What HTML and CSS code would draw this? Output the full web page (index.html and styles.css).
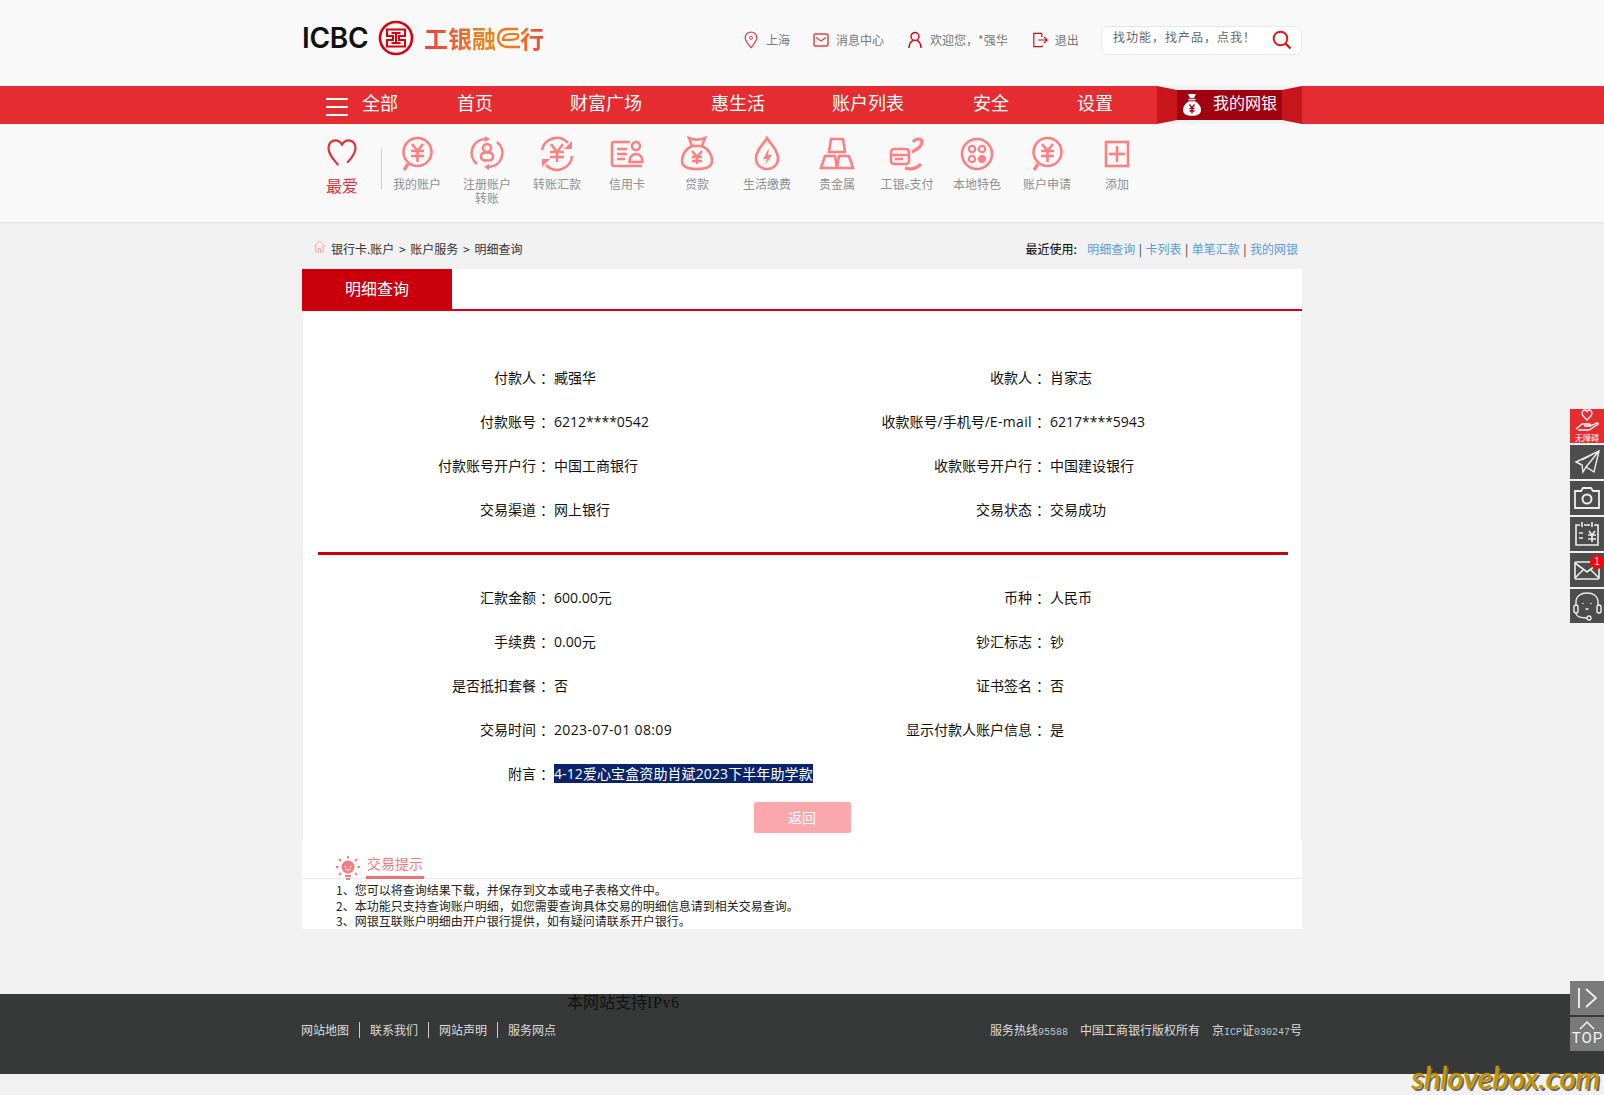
FILE: index.html
```html
<!DOCTYPE html>
<html lang="zh-CN">
<head>
<meta charset="utf-8">
<title>明细查询</title>
<link rel="stylesheet" href="styles.css">
</head>
<body>
<header class="top">
  <div class="wrap top-in">
    <div class="logo">
      <span class="logo-en">ICBC</span>
      <svg class="emblem" viewBox="0 0 36 36"><circle cx="18" cy="18" r="16" fill="none" stroke="#d7000f" stroke-width="2.600"/><path d="M9 9.500H27V16H21V20H27V26.500H9V20H15V16H9zM13.500 13H22.500M18 13V23M13.500 23H22.500" fill="none" stroke="#d7000f" stroke-width="2"/></svg>
      <span class="logo-cn">工银融</span>
      <svg class="logo-e" viewBox="0 0 26 24"><path d="M22 3H11C5 3 2 7 2 12s4 9 9 9h13" fill="none" stroke="#ee7a1c" stroke-width="2.400"/><path d="M7 14c0-4 3-6 7-6h6c3 0 3 4 0 5-3 1-8 1-13 1z" fill="none" stroke="#ee7a1c" stroke-width="2.200"/></svg>
      <span class="logo-cn logo-end">行</span>
    </div>
    <nav class="tools">
      <a class="tool t1"><svg viewBox="0 0 16 18"><path d="M8 1.200c-3.400 0-5.800 2.500-5.800 5.500 0 3.300 3.400 6.900 5.800 10 2.400-3.100 5.800-6.700 5.800-10 0-3-2.400-5.500-5.800-5.500z" fill="none" stroke="#e4434a" stroke-width="1.300"/><circle cx="8" cy="6.800" r="1.500" fill="none" stroke="#e4434a"/></svg>上海</a>
      <a class="tool t2"><svg viewBox="0 0 16 14"><rect x="1" y="1" width="14" height="12" rx="1.500" fill="none" stroke="#e4434a" stroke-width="1.500"/><path d="M3 4.500l5 3.500 5-3.500" fill="none" stroke="#e4434a" stroke-width="1.400"/></svg>消息中心</a>
      <a class="tool t3"><svg viewBox="0 0 16 18"><circle cx="8" cy="5.500" r="4" fill="none" stroke="#d7000f" stroke-width="1.400"/><path d="M2 17c0-4 2-7 4-7.500M14 17c0-4-2-7-4-7.500" fill="none" stroke="#d7000f" stroke-width="1.400"/></svg>欢迎您，*强华</a>
      <a class="tool t4"><svg viewBox="0 0 18 18"><path d="M11 1.500H2v15h9l1-1" fill="none" stroke="#d7000f" stroke-width="1.300"/><path d="M7 9h10M13.500 5.500L17 9l-3.500 3.500M11 1.500v4" fill="none" stroke="#d7000f" stroke-width="1.300"/></svg>退出</a>
    </nav>
    <div class="search">
      <span class="search-text">找功能，找产品，点我！</span>
      <svg viewBox="0 0 20 20"><circle cx="8.500" cy="8.500" r="6.800" fill="none" stroke="#f01010" stroke-width="1.900"/><path d="M13.500 13.500l5 5" stroke="#f01010" stroke-width="2.400"/></svg>
    </div>
  </div>
</header>

<div class="nav">
  <div class="wrap nav-in">
    <span class="burger"><i></i><i></i><i></i></span>
    <a class="nav-all">全部</a>
    <a class="nav-home">首页</a>
    <a class="nav-i n1">财富广场</a>
    <a class="nav-i n2">惠生活</a>
    <a class="nav-i n3">账户列表</a>
    <a class="nav-i n2">安全</a>
    <a class="nav-i n4">设置</a>
    <div class="ribbon">
      <svg class="ribbon-svg" viewBox="0 0 145 38"><rect width="145" height="38" fill="#f1f1f1"/><path d="M0 0l20 4v30L0 38zM145 0l-20 4v30l20 4z" fill="#c8171c"/><rect x="20" y="4" width="105" height="30" fill="#a00010"/></svg>
      <svg class="bag" viewBox="0 0 20 24"><path d="M6 1h8l-2 4h-4z" fill="#fff"/><rect x="6.500" y="5.800" width="7" height="1.500" fill="#fff"/><path d="M7 8.300h6c4 2 6 5.500 6 8.500 0 4-3 6-9 6s-9-2-9-6c0-3 2-6.500 6-8.500z" fill="#fff"/><path d="M7.500 11.500L10 15l2.500-3.500M7.500 15.500h5M7.500 18h5M10 15v5.500" fill="none" stroke="#a00010" stroke-width="1.300"/></svg>
      <span class="ribbon-t">我的网银</span>
    </div>
  </div>
</div>

<section class="sub">
  <div class="wrap sub-in">
    <div class="fav">
      <svg viewBox="0 0 32 30"><path d="M12 28C7 22 1.500 17 1.500 9.500 1.500 4.500 5 1.500 9 1.500c3 0 5.500 2 7 4.500 1.500-2.500 4-4.500 7-4.500 4 0 7.500 3 7.500 8 0 6.500-4 11-9 16" fill="none" stroke="#e03238" stroke-width="2.300"/></svg>
      <span>最爱</span>
    </div>
    <a class="app"><svg viewBox="0 0 36 36"><circle cx="18.500" cy="16" r="14" class="ic"/><path d="M9 28l-4 6" class="ic th"/><path d="M13 8l5.500 7 5.500-7M12 15h13M12 20h13M18.500 15v11" class="ic"/></svg><span>我的账户</span></a>
    <a class="app"><svg viewBox="0 0 36 36"><path d="M8 28A14 14 0 0 1 16 3M28 6a14 14 0 0 1-8 25" class="ic"/><path d="M16 0l5 3-5 3zM20 28l-5 3 5 3z" fill="#ff8080"/><circle cx="18" cy="12" r="4" class="ic"/><rect x="12" y="16.500" width="12" height="8" rx="4" class="ic"/></svg><span>注册账户<br>转账</span></a>
    <a class="app"><svg viewBox="0 0 36 36"><path d="M3 14A15 15 0 0 1 29 7M33 20A15 15 0 0 1 7 29" class="ic"/><path d="M33 5v8h-8zM3 31v-8h8z" fill="#ff8080"/><path d="M12 8l6 8 6-8M11 16h14M11 21h14M18 16v10" class="ic"/></svg><span>转账汇款</span></a>
    <a class="app"><svg viewBox="0 0 36 36"><path d="M21 6H5C3.500 6 3 7 3 8v20c0 1 1 2 2 2h28" class="ic"/><path d="M8 13h10M8 18h10M8 23h8" class="ic"/><circle cx="27" cy="10" r="4" class="ic"/><path d="M20.500 26c0-5 2.500-8 6.500-8s6.500 3 6.500 8z" class="ic"/></svg><span>信用卡</span></a>
    <a class="app"><svg viewBox="0 0 36 36"><path d="M10 2c5 2 11 2 16 0l-3 8H13z" class="ic"/><path d="M13 10C5 14 3 20 3 25c0 6 6 8 15 8s15-2 15-8c0-5-2-11-10-15" class="ic"/><path d="M13 15l5 6 5-6M13 21h10M13 25h10M18 21v7" class="ic"/></svg><span>贷款</span></a>
    <a class="app"><svg viewBox="0 0 36 36"><path d="M18 2C14 9 7 14 7 22c0 7 5 11 11 11s11-4 11-11c0-8-7-13-11-20z" class="ic"/><path d="M20 12l-6 11h4l-2 6 7-10h-4z" fill="#ff8080"/></svg><span>生活缴费</span></a>
    <a class="app"><svg viewBox="0 0 36 36"><path d="M12 3h12l2 13H10zM6 20h10l2 12H2zM20 20h10l4 12H18z" class="ic"/></svg><span>贵金属</span></a>
    <a class="app"><svg viewBox="0 0 36 36"><rect x="2" y="13" width="18" height="15" rx="3" class="ic"/><path d="M2 19h18M6 23h8" class="ic"/><path d="M24 6c3-4 9-4 9 0 0 5-6 8-10 10" class="ic th"/><path d="M16 32c6 2 12 0 16-4" class="ic th"/></svg><span>工银<em>e</em>支付</span></a>
    <a class="app"><svg viewBox="0 0 36 36"><circle cx="18" cy="18" r="15" class="ic"/><circle cx="13" cy="13" r="3.200" class="ic th2"/><circle cx="23" cy="13" r="3.200" class="ic th2"/><circle cx="13" cy="23" r="3.200" class="ic th2"/><circle cx="23" cy="23" r="4" fill="#ff8080"/></svg><span>本地特色</span></a>
    <a class="app"><svg viewBox="0 0 36 36"><circle cx="18.500" cy="16" r="14" class="ic"/><path d="M9 28l-4 6" class="ic th"/><path d="M13 8l5.500 7 5.500-7M12 15h13M12 20h13M18.500 15v11" class="ic"/></svg><span>账户申请</span></a>
    <a class="app"><svg viewBox="0 0 36 36"><rect x="7" y="6" width="22" height="24" class="ic"/><path d="M10 18h16M18 10v16" class="ic"/></svg><span>添加</span></a>
  </div>
</section>

<main class="wrap">
  <div class="crumbs">
    <div class="crumb-l">
      <svg viewBox="0 0 14 14"><path d="M1 7l6-6 6 6M3 6v7h3V9h2v4h3V6" fill="none" stroke="#f7a0a0"/></svg>
      <span>银行卡.账户 &gt; 账户服务 &gt; 明细查询</span>
    </div>
    <div class="crumb-r">
      <b>最近使用:</b>
      <a>明细查询</a> | <a>卡列表</a> | <a>单笔汇款</a> | <a>我的网银</a>
    </div>
  </div>

  <div class="tabbar"><div class="tab">明细查询</div></div>

  <div class="card">
    <dl class="grid">
      <dt>付款人<i>：</i></dt><dd>臧强华</dd><dt>收款人<i>：</i></dt><dd>肖家志</dd>
      <dt>付款账号<i>：</i></dt><dd>6212****0542</dd><dt>收款账号/手机号/<span class="lat">E-mail</span><i>：</i></dt><dd>6217****5943</dd>
      <dt>付款账号开户行<i>：</i></dt><dd>中国工商银行</dd><dt>收款账号开户行<i>：</i></dt><dd>中国建设银行</dd>
      <dt>交易渠道<i>：</i></dt><dd>网上银行</dd><dt>交易状态<i>：</i></dt><dd>交易成功</dd>
    </dl>
    <hr class="rule">
    <dl class="grid">
      <dt>汇款金额<i>：</i></dt><dd>600.00元</dd><dt>币种<i>：</i></dt><dd>人民币</dd>
      <dt>手续费<i>：</i></dt><dd>0.00元</dd><dt>钞汇标志<i>：</i></dt><dd>钞</dd>
      <dt>是否抵扣套餐<i>：</i></dt><dd>否</dd><dt>证书签名<i>：</i></dt><dd>否</dd>
      <dt>交易时间<i>：</i></dt><dd><span class="lat">2023-07-01 08:09</span></dd><dt>显示付款人账户信息<i>：</i></dt><dd>是</dd>
      <dt>附言<i>：</i></dt><dd class="wide"><span class="sel">4-12爱心宝盒资助肖斌2023下半年助学款</span></dd>
    </dl>
    <div class="actions"><a class="back">返回</a></div>
  </div>

  <div class="tips">
    <div class="tips-head">
      <svg viewBox="0 0 24 26"><circle cx="12" cy="11" r="6.500" fill="#f47a7d"/><path d="M8.500 10l2 1.500M15.500 10l-2 1.500M9 13q3 2.500 6 0" stroke="#fff" fill="none"/><rect x="9" y="19" width="6" height="2" fill="#f47a7d"/><rect x="10" y="22" width="4" height="2" fill="#f47a7d"/><path d="M12 0v2.500M3 3l2 2M21 3l-2 2M0 11h2.500M24 11h-2.500M3 19l2-2M21 19l-2-2" stroke="#f47a7d" stroke-width="1.800"/></svg>
      <span>交易提示</span>
    </div>
    <ol class="tips-list">
      <li>1、您可以将查询结果下载，并保存到文本或电子表格文件中。</li>
      <li>2、本功能只支持查询账户明细，如您需要查询具体交易的明细信息请到相关交易查询。</li>
      <li>3、网银互联账户明细由开户银行提供，如有疑问请联系开户银行。</li>
    </ol>
  </div>
</main>

<footer class="foot">
  <div class="wrap">
    <div class="ipv6">本网站支持<span class="lat">IPv6</span></div>
    <div class="foot-row">
      <div class="foot-l"><a>网站地图</a><a>联系我们</a><a>网站声明</a><a>服务网点</a></div>
      <div class="foot-r"><span>服务热线<b>95588</b></span><span>中国工商银行版权所有</span><span>京<b>ICP</b>证<b>030247</b>号</span></div>
    </div>
  </div>
</footer>

<aside class="side">
  <a class="side-i red"><svg viewBox="0 0 34 24"><path d="M17 11c-3-3-5-4-5-6.500C12 2.500 13.500 1 15 1c1 0 1.500.5 2 1.500C17.500 1.500 18 1 19 1c1.500 0 3 1.500 3 3.500C22 7 20 8 17 11z" fill="none" stroke="#fff" stroke-width="1.300"/><path d="M6 20l6-5h7c2 0 2 2 0 2h-5 6l7-3c2 0 1 2 0 2l-8 5H8" fill="none" stroke="#fff" stroke-width="1.300"/></svg><span>无障碍</span></a>
  <a class="side-i"><svg viewBox="0 0 34 34"><path d="M6 17L29 6l-5 21-8-5-3 5-1-7zM12 15L29 6 16 22" fill="none" stroke="#eee" stroke-width="1.400"/></svg></a>
  <a class="side-i"><svg viewBox="0 0 34 34"><path d="M5 10h6l2-3h8l2 3h6v17H5z" fill="none" stroke="#eee" stroke-width="1.800"/><circle cx="17" cy="18" r="4.500" fill="none" stroke="#eee" stroke-width="2"/></svg></a>
  <a class="side-i"><svg viewBox="0 0 34 34"><path d="M10 8H6v20h22V8h-4M14 8h6M12 5v5M22 5v5M9 16h4M9 21h4M19 14l3 4 3-4M18 18h8M18 22h8M22 18v7" fill="none" stroke="#eee" stroke-width="1.600"/></svg></a>
  <a class="side-i"><svg viewBox="0 0 34 34"><rect x="5" y="9" width="24" height="17" rx="1" fill="none" stroke="#eee" stroke-width="1.600"/><path d="M5 10l12 9 12-9M5 25l8-8M29 25l-8-8" fill="none" stroke="#eee" stroke-width="1.600"/></svg><b class="badge">1</b></a>
  <a class="side-i"><svg viewBox="0 0 34 34"><path d="M6 17v-4C6 7 11 4 17 4s11 3 11 9v4" fill="none" stroke="#eee" stroke-width="1.400"/><rect x="4" y="16" width="4" height="8" rx="2" fill="none" stroke="#eee" stroke-width="1.400"/><rect x="27" y="16" width="4" height="8" rx="2" fill="none" stroke="#eee" stroke-width="1.400"/><path d="M6 24c0 3 3 5 11 5" fill="none" stroke="#eee" stroke-width="1.400"/><circle cx="19" cy="29" r="2" fill="none" stroke="#eee" stroke-width="1.300"/><path d="M13 14v1M21 14v1M15.500 20h3" stroke="#eee" stroke-width="1.600"/></svg></a>
</aside>

<aside class="side-b">
  <a class="side-g"><svg viewBox="0 0 34 34"><path d="M9 7v20M16 8l10 9-10 9" fill="none" stroke="#f2f2f2" stroke-width="1.800"/></svg></a>
  <a class="side-g"><svg class="up" viewBox="0 0 20 10"><path d="M3 9l7-7 7 7" fill="none" stroke="#f2f2f2" stroke-width="1.500"/></svg><span>TOP</span></a>
</aside>

<div class="mark">shlovebox.com</div>
</body>
</html>
```
FILE: styles.css
```css
* { box-sizing: border-box; }
html, body { margin: 0; padding: 0; }
body {
  background: #f1f1f1;
  color: #000;
  font: 14px/1.2 "Noto Sans CJK SC", "Liberation Sans", sans-serif;
  height: 1095px;
  overflow: hidden;
  position: relative;
}
a { color: inherit; text-decoration: none; }
.wrap { width: 1000px; margin: 0 auto; }

/* header */
.top { height: 86px; background: #f9f9f9; }
.top-in { display: flex; height: 86px; position: relative; }
.logo { display: flex; align-items: center; height: 76px; width: 440px; }
.logo-en { font: 600 28px/1 Inter, sans-serif; color: #111; letter-spacing: -.3px; width: 66px; }
.emblem { width: 36px; height: 36px; margin-left: 10px; }
.logo-cn {
  font-size: 24px; font-weight: 700; line-height: 28px; margin-left: 10px;
  background: linear-gradient(90deg, #e8443f, #ee8a17);
  -webkit-background-clip: text; background-clip: text; color: transparent;
}
.logo-e { width: 26px; height: 24px; margin-left: 0; }
.logo-end { margin-left: -2px; background: linear-gradient(90deg, #ee7a1c, #e8443f); -webkit-background-clip: text; background-clip: text; }
.tools { display: flex; align-items: center; height: 80px; font-size: 12px; color: #777; }
.tool { display: flex; align-items: center; gap: 7px; }
.tool svg { width: 16px; height: 18px; }
.t1 { margin-left: 1px; }
.t2 { margin-left: 23px; }
.t3 { margin-left: 23px; }
.t4 { margin-left: 24px; }
.search {
  position: absolute; right: 0; top: 26px; width: 201px; height: 29px;
  background: #fff; border: 1px solid #e8e8e8; border-radius: 7px;
  display: flex; justify-content: space-between; padding: 1px 9px 0 11px;
}
.search-text { font-size: 12px; letter-spacing: 1px; color: #666; line-height: 17px; white-space: nowrap; }
.search svg { width: 20px; height: 20px; margin-top: 2px; }

/* nav */
.nav { height: 38px; background: #e52c30; color: #fff; font-size: 18px; }
.nav-in { display: flex; align-items: center; height: 38px; }
.nav-in a { margin-top: -4px; white-space: nowrap; }
.burger { width: 22px; margin: 3px 14px 0 24px; display: flex; flex-direction: column; gap: 6px; }
.burger i { display: block; height: 2px; background: #fff; }
.nav-all { width: 36px; }
.nav-home { margin-left: 59px; }
.n1 { margin-left: 77px; }
.n2 { margin-left: 69px; }
.n3 { margin-left: 67px; }
.n4 { margin-left: 68px; }
.ribbon { margin-left: auto; width: 145px; height: 38px; position: relative; display: flex; align-items: center; }
.ribbon-svg { position: absolute; inset: 0; width: 145px; height: 38px; }
.bag { position: relative; width: 20px; height: 24px; margin-left: 25px; }
.ribbon-t { position: relative; font-size: 16px; margin: -4px 0 0 11px; }

/* app row */
.sub { height: 98px; background: #f9f9f9; box-shadow: 0 1px 2px rgba(0,0,0,.08); }
.sub-in { display: flex; height: 98px; }
.fav { width: 80px; height: 40px; margin-top: 25px; border-right: 1px solid #ccc; display: block; position: relative; }
.fav svg { position: absolute; left: 25px; top: -10px; width: 30px; height: 28px; }
.fav span { position: absolute; left: 24px; top: 25px; font-size: 16px; color: #e03238; line-height: 22px; }
.app { width: 70px; display: block; text-align: center; font-size: 12px; line-height: 14px; color: #909090; padding-top: 12px; }
.app svg { display: block; width: 36px; height: 36px; margin: 0 auto 5px; }
.app em { font-style: normal; font-size: 9px; color: #7f9cc0; }
.ic { fill: none; stroke: #ff8080; stroke-width: 2.600; }
.th { stroke-width: 3.200; }
.th2 { stroke-width: 2.200; }

/* breadcrumb */
.crumbs { display: flex; justify-content: space-between; align-items: center; height: 47px; font-size: 12px; color: #333; padding: 7px 4px 0 11px; }
.crumb-l { display: flex; align-items: center; gap: 5px; word-spacing: 2px; }
.crumb-l svg { width: 13px; height: 13px; margin-top: -4px; }
.crumb-r { word-spacing: .8px; }
.crumb-r a { color: #5b9bd5; }
.crumb-r b { font-weight: 400; color: #000; margin-right: 7px; }

/* tab */
.tabbar { height: 42px; background: #fff; border-bottom: 2px solid #d2000f; }
.tab { width: 150px; height: 40px; background: #c9000b; color: #fff; font-size: 16px; line-height: 39px; text-align: center; }

/* card */
.card { background: #fff; border-left: 1px solid #eee; border-right: 1px solid #eee; height: 529px; padding-top: 45px; }
.grid { display: grid; grid-template-columns: 247px 249px 247px 1fr; grid-auto-rows: 44px; margin: 0; line-height: 44px; font-family: "Open Sans", "Noto Sans CJK SC", sans-serif; }
.grid dt { text-align: right; white-space: nowrap; color: #111; }
.grid dt i { display: inline-block; width: 14px; text-indent: 4px; text-align: left; font-style: normal; }
.grid dd { margin: 0 0 0 4px; color: #111; white-space: nowrap; }
.grid .wide { grid-column: 2 / 5; }
.grid .lat { letter-spacing: .35px; }
.sel { display: inline-block; background: #0a246a; color: #fff; line-height: 19px; vertical-align: 0; letter-spacing: .1px; }
.rule { height: 3px; margin: 20px 13px 21px 15px; border: 0; background: #c9000b; }
.actions { display: flex; justify-content: center; margin-top: 6px; }
.back { width: 97px; height: 31px; background: #faa8ab; color: #fff; font-size: 14px; line-height: 31px; text-align: center; border-radius: 2px; }

/* tips */
.tips { background: #fff; height: 89px; }
.tips-head { height: 39px; border-bottom: 1px solid #e8e8e8; display: flex; align-items: flex-start; padding: 14px 0 0 34px; }
.tips-head svg { width: 24px; height: 26px; margin-top: 2px; }
.tips-head span { height: 25px; margin-left: 6px; padding: 0 1px; font-size: 14px; line-height: 18px; color: #f47a7d; border-bottom: 3px solid #ec7076; }
.tips-list { list-style: none; margin: 0; padding: 3px 0 0 34px; font-size: 12px; line-height: 15.500px; color: #222; }

/* footer */
.foot { margin-top: 65px; height: 80px; background: #373938; }
.ipv6 { font: 16px/17px "Liberation Serif", "Noto Sans CJK SC", serif; color: #111; padding: 0 0 0 265px; }
.ipv6 .lat { letter-spacing: .6px; }
.foot-row { display: flex; justify-content: space-between; margin-top: 11px; font-size: 12px; color: #ddd; line-height: 16px; }
.foot-l { display: flex; margin-left: -1px; }
.foot-l a { padding: 0 10px; border-left: 1px solid #ccc; }
.foot-l a:first-child { border: 0; padding-left: 0; }
.foot-r { display: flex; gap: 12px; }
.foot-r b { font: 400 10px "Liberation Mono", monospace; color: #b9c6d2; }

/* side tools */
.side { position: absolute; right: 0; top: 409px; width: 34px; display: flex; flex-direction: column; gap: 2px; }
.side-i { position: relative; display: block; height: 34px; background: #4d4d4d; }
.side-i svg { display: block; width: 34px; height: 34px; }
.side-i.red { background: #e52c30; }
.side-i.red svg { height: 24px; }
.side-i.red span { display: block; color: #fff; font-size: 8px; line-height: 10px; text-align: center; }
.badge { position: absolute; right: 0; top: 2px; width: 14px; height: 14px; border-radius: 50%; background: #f00; color: #fff; font: 400 10px/14px "Liberation Sans", sans-serif; text-align: center; }
.side-b { position: absolute; right: 0; top: 981px; width: 34px; display: flex; flex-direction: column; gap: 2px; }
.side-g { display: block; height: 34px; background: #7a7a7a; text-align: center; color: #f2f2f2; }
.side-g svg { display: block; width: 34px; height: 34px; }
.side-g .up { width: 20px; height: 10px; margin: 3px auto 0; }
.side-g span { display: block; font: 15px/16px Roboto, sans-serif; letter-spacing: 1px; margin-right: -1px; }

.mark {
  position: absolute; right: 4px; top: 1061px;
  font: italic 400 31px/32px Lato, sans-serif;
  color: #c49500; text-shadow: 2px 2px 0 #666; -webkit-text-stroke: .5px #c49500; white-space: nowrap;
}
```
